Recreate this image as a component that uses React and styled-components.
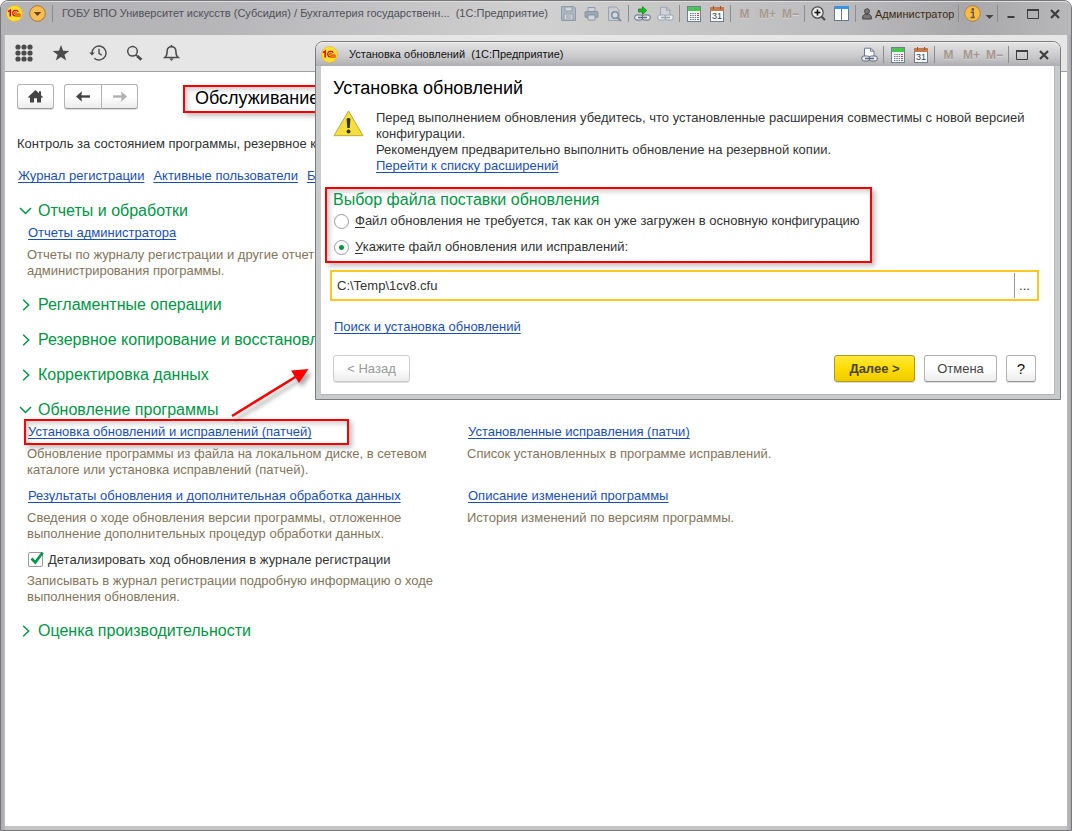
import React, { useState } from "react";
import styled, { createGlobalStyle, css } from "styled-components";

const GlobalStyle = createGlobalStyle`
  * {
    box-sizing: border-box;
  }

  body {
    margin: 0;
    background: #fff;
    color: #333;
    font-family: "Liberation Sans", Arial, sans-serif;
    font-size: 13px;
    line-height: 16px;
  }

  button,
  input {
    font: inherit;
    color: inherit;
  }

  svg {
    flex: none;
  }
`;

/* window chrome */

const Window = styled.div`
  position: relative;
  display: flex;
  flex-direction: column;
  min-height: 100vh;
  padding: 0 4px 4px;
  border: 1px solid #77777a;
  border-radius: 8px 8px 0 0;
  background: linear-gradient(to right, #a9a9ab, #c6c5c6 6px, #c6c5c6 calc(100% - 6px), #a9a9ab);
`;

const TitleBar = styled.header`
  display: flex;
  align-items: flex-start;
  height: 34px;
  margin: 0 -4px;
  padding: 0 5px 0 2px;
  border-radius: 7px 7px 0 0;
  border-top: 1px solid #dedede;
  background: linear-gradient(to right, #b3b3b6, #b6b6b9 20%, #d0d0d0 50%, #bcbcbe 78%, #a8a8ab 90%, #b8b8ba);
`;

const Title = styled.div`
  flex: 1;
  min-width: 0;
  padding-left: ${(p) => p.$indent}px;
  overflow: hidden;
  white-space: pre;
  font-size: 11px;
  line-height: 23px;
  color: ${(p) => (p.$active ? "#111" : "#505058")};
`;

const Tools = styled.div`
  display: flex;
  align-items: center;
  height: 23px;
`;

const Tool = styled.button`
  display: flex;
  align-items: center;
  justify-content: center;
  flex: none;
  width: ${(p) => p.$width || 23}px;
  height: 24px;
  padding: 0;
  border: 0;
  background: none;
  color: #444;

  &:disabled {
    color: #a6988f;
    font-size: 12px;
    font-weight: bold;
    text-shadow: 0 1px 0 #d8d8d8;
  }
`;

const Separator = styled.span`
  flex: none;
  width: 1px;
  height: 17px;
  margin: 0 2px;
  background: #8c8c90;
`;

const User = styled.button`
  display: flex;
  align-items: center;
  gap: 3px;
  width: 98px;
  height: 24px;
  padding: 0 0 0 4px;
  border: 0;
  background: none;
  color: #3c2c10;
  font-size: 11px;
`;

const NavBar = styled.nav`
  display: flex;
  align-items: center;
  height: 37px;
  background: #e6e6e6;
  border-bottom: 1px solid #a0a0a0;
`;

const NavButton = styled.button`
  display: flex;
  align-items: center;
  justify-content: center;
  width: 37px;
  height: 36px;
  padding: 0;
  border: 0;
  background: none;
`;

const Page = styled.main`
  flex: 1;
  padding: 12px;
  background: #fff;
`;

/* controls */

const Button = styled.button`
  display: inline-flex;
  align-items: center;
  justify-content: center;
  min-width: ${(p) => p.$width || 30}px;
  height: 27px;
  padding: 0 12px;
  border: 1px solid #b3b3b3;
  border-bottom-color: #999;
  border-radius: 3px;
  background: linear-gradient(#fff 50%, #ececec);
  box-shadow: 0 1px 0 #ddd;
  color: #444;

  &:disabled {
    border-color: #ccc;
    color: #999;
  }

  ${(p) =>
    p.$primary &&
    css`
      border-color: #b09a1c;
      background: linear-gradient(#ffe93c, #fddc00 50%, #efcb00);
      color: #4a4320;
      font-weight: bold;
    `}

  ${(p) =>
    p.$compact &&
    css`
      height: 25px;
      padding: 0;
    `}
`;

const HelpButton = styled(Button)`
  padding: 0;
  color: #111;
  font-size: 15px;
`;

const ButtonPair = styled.div`
  display: flex;

  ${Button}:first-child {
    border-radius: 3px 0 0 3px;
  }

  ${Button}:last-child {
    border-left: 0;
    border-radius: 0 3px 3px 0;
  }
`;

const Link = styled.a`
  color: #1a50b0;
  text-decoration: underline;
  text-decoration-skip-ink: none;
  text-underline-offset: 2px;
  white-space: nowrap;
`;

const highlight = css`
  border: 2px solid #f80000;
  box-shadow: 3px 3px 5px rgba(0, 0, 0, 0.25), inset 3px 3px 5px rgba(0, 0, 0, 0.18);
`;

/* page */

const PageHeader = styled.div`
  display: flex;
  align-items: center;
  gap: 10px;
  height: 25px;
  white-space: nowrap;
`;

const PageTitle = styled.h1`
  ${highlight}
  height: 28px;
  margin: 4px 0 0 35px;
  padding: 0 10px;
  color: #000;
  font-size: 18px;
  font-weight: normal;
  line-height: 22px;
`;

const Intro = styled.p`
  margin: 27px 0 16px;
`;

const LinkRow = styled.div`
  display: flex;
  gap: 9px;
  margin: 0 0 16px 1px;
`;

const Sections = styled.div`
  display: flex;
  flex-direction: column;
  gap: 13px;
`;

const SectionHeading = styled.button`
  display: flex;
  align-items: center;
  gap: 5px;
  height: 22px;
  padding: 0 0 0 1px;
  border: 0;
  background: none;
  color: #009646;
  font-size: 16px;
`;

const SectionBody = styled.div`
  display: grid;
  grid-template-columns: minmax(0, 440px) minmax(0, 1fr);
  row-gap: 7px;
  padding: 0 0 2px 10px;
`;

const Item = styled.div`
  position: relative;
  grid-column: ${(p) => p.$column || 1};
`;

const ItemTitle = styled.div`
  position: relative;
  display: flex;
  align-items: center;
  height: ${(p) => (p.$check ? 21 : 22)}px;
  padding-left: 1px;
`;

const Description = styled.p`
  margin: 3px 0 0;
  color: #82755b;
`;

const Marker = styled.span`
  ${highlight}
  position: absolute;
  inset: -2px auto -2px -3px;
  width: 325px;
  pointer-events: none;
`;

const Arrow = styled.svg`
  position: absolute;
  left: 201px;
  bottom: 100%;
  margin-bottom: 3px;
  overflow: visible;
  filter: drop-shadow(3px 4px 2px rgba(0, 0, 0, 0.35));
  pointer-events: none;
`;

const CheckLabel = styled.label`
  display: flex;
  align-items: center;
  gap: 5px;
`;

const CheckBox = styled.span`
  position: relative;
  display: flex;

  input {
    appearance: none;
    width: 15px;
    height: 15px;
    margin: 0;
    border: 1px solid #999;
    border-radius: 2px;
    background: #fff;
  }

  svg {
    position: absolute;
    left: 2px;
    bottom: 2px;
    pointer-events: none;
  }

  input:not(:checked) + svg {
    display: none;
  }
`;

/* dialog */

const Dialog = styled.section`
  position: absolute;
  top: 40px;
  left: 314px;
  right: 10px;
  z-index: 2;
  padding: 0 5px 4px;
  border: 1px solid #7c7c7e;
  border-radius: 8px 8px 0 0;
  background: #c9cacc;
`;

const DialogBar = styled(TitleBar)`
  height: 24px;
  margin: 0 -5px;
  padding: 0 5px;
  border-top-color: #f0f0f0;
  background: linear-gradient(#e2e2e3, #c9c9cb 60%, #adaeb1);
`;

const DialogBody = styled.div`
  padding: 11px 15px 12px 9px;
  background: #fff;
  border: 1px solid #b4b4b6;
  border-top: 0;
  border-left: 0;
`;

const DialogTitle = styled.h2`
  margin: 0 0 11px 3px;
  color: #000;
  font-size: 18px;
  font-weight: normal;
  line-height: 22px;
`;

const Notice = styled.div`
  display: flex;
  gap: 12px;
  margin: 0 0 13px 3px;

  p {
    margin: 0;
  }
`;

const FileChoice = styled.fieldset`
  ${highlight}
  width: fit-content;
  height: 76px;
  margin: 0 0 7px -5px;
  padding: 1px 10px 0 6px;

  h3 {
    margin: 0;
    color: #009646;
    font-size: 16px;
    font-weight: normal;
    line-height: 20px;
  }
`;

const RadioLabel = styled.label`
  display: flex;
  align-items: center;
  gap: 6px;
  height: 16px;
  margin-bottom: 10px;
  white-space: pre;

  h3 + & {
    margin-top: 3px;
  }

  u {
    text-underline-offset: 2px;
  }

  input {
    appearance: none;
    width: 15px;
    height: 15px;
    margin: 0 0 0 1px;
    border: 1px solid #999;
    border-radius: 50%;
    background: #fff;
  }

  input:checked {
    background: radial-gradient(#009646 2px, #fff 3px);
  }
`;

const FileField = styled.div`
  display: flex;
  align-items: center;
  height: 31px;
  border: 2px solid #fac81e;
  background: #fff;

  input {
    flex: 1;
    min-width: 0;
    height: 26px;
    padding: 0 5px;
    border: 0;
    outline: 0;
    background: none;
  }

  button {
    width: 23px;
    height: 25px;
    padding: 0 3px 0 0;
    border: 0;
    border-left: 1px solid #999;
    background: none;
  }
`;

const SearchRow = styled.div`
  margin: 18px 0 20px 4px;
`;

const Footer = styled.footer`
  display: flex;
  gap: 9px;
  padding: 0 3px;

  ${Button}:first-child {
    margin-right: auto;
  }
`;

/* icons */

const LogoIcon = () => (
  <svg width="17" height="17" viewBox="0 0 17 17">
    <circle cx="8.5" cy="8.5" r="8" fill="#ffe030" stroke="#eeb02d" strokeWidth=".7" />
    <path d="M2 6.7l2.2-1.5v6.3" fill="none" stroke="#d90b0b" strokeWidth="1.6" />
    <path d="M12.200 7C11.700 4.700 6.700 4.600 6.700 8c0 2 1.200 3 2.800 3h5.400" fill="none" stroke="#d90b0b" strokeWidth="1.200" />
    <path d="M10.500 7.600c-.8-.8-2-.5-2 .5 0 .7.500 1 1.200 1h5" fill="none" stroke="#d90b0b" />
  </svg>
);

const MenuIcon = () => (
  <svg width="17" height="17" viewBox="0 0 17 17">
    <circle cx="8.5" cy="8.5" r="7.8" fill="#f8bd55" stroke="#a97929" />
    <path d="M4.8 7h7.4l-3.7 4z" fill="#634315" />
  </svg>
);

const SaveIcon = () => (
  <svg width="15" height="15" viewBox="0 0 15 15">
    <path d="M.5.500h12.500l1.500 1.500v12.500H.5z" fill="#aeb7c0" stroke="#8f9daa" />
    <path d="M4 1h7v4H4zM3 8h9v6H3z" fill="#d2d5d9" stroke="#909eac" />
    <path d="M5 10h5M5 12h5" stroke="#909eac" />
  </svg>
);

const PrintIcon = () => (
  <svg width="15" height="15" viewBox="0 0 15 15">
    <path d="M4 6V1.5h7V6" fill="#cfd1d4" stroke="#8f9daa" />
    <rect x="1" y="5.5" width="13" height="6" rx="1" fill="#9ba7b2" stroke="#8796a4" />
    <path d="M4 9h7v5H4z" fill="#d5d6d8" stroke="#8796a4" />
  </svg>
);

const PreviewIcon = () => (
  <svg width="15" height="16" viewBox="0 0 15 16">
    <path d="M1.5 1H9l3 3v10.5H1.5z" fill="#cacdd1" stroke="#98a4af" />
    <circle cx="8" cy="9" r="3.3" fill="#d1d9df" stroke="#8090a0" strokeWidth="1.6" />
    <path d="M10.5 11.5L14 15" stroke="#8090a0" strokeWidth="2" />
  </svg>
);

const ChainLinks = ({ stroke }) => (
  <g fill="#eceef0" stroke={stroke}>
    <rect x=".8" y="9" width="8" height="5" rx="2" />
    <rect x="8.2" y="9" width="8" height="5" rx="2" />
    <path d="M4 11.5h9" strokeWidth="1.5" />
  </g>
);

const SendLinkIcon = () => (
  <svg width="17" height="16" viewBox="0 0 17 16">
    <ChainLinks stroke="#59697a" />
    <path d="M4.5 3h4V.5l4.2 4-4.2 4V6h-4z" fill="#13c21a" stroke="#087c10" strokeWidth=".7" />
  </svg>
);

const PageLinkIcon = ({ muted }) => (
  <svg width="17" height="16" viewBox="0 0 17 16">
    <path d="M3.5 9V1.2h6l3.5 3V9" fill={muted ? "#cfd2d6" : "#fff"} stroke={muted ? "#9aa6b1" : "#6d7c8b"} />
    <path d="M9.5 1.2v3H13" fill="none" stroke={muted ? "#9aa6b1" : "#6d7c8b"} />
    <ChainLinks stroke={muted ? "#94a1ae" : "#59697a"} />
  </svg>
);

const CalculatorIcon = () => (
  <svg width="14" height="16" viewBox="0 0 14 16">
    <rect x=".5" y=".5" width="13" height="15" fill="#f4f5f6" stroke="#71808d" />
    <path d="M1 1h12v4H1z" fill="#48c64f" />
    <path d="M3 7.5h6M3 9.5h6M3 11.5h6M3 13.5h6" stroke="#667583" strokeDasharray="1.4 1" />
    <path d="M10 7.5h2M10 9.5h2" stroke="#e33" />
    <path d="M10 11.5h2M10 13.5h2" stroke="#667583" />
  </svg>
);

const CalendarIcon = () => (
  <svg width="14" height="16" viewBox="0 0 14 16">
    <rect x=".5" y="1.5" width="13" height="14" fill="#fafafa" stroke="#71808d" />
    <path d="M0 1h14v4H0z" fill="#c17b4d" />
    <path d="M3.5 0v3M10.5 0v3" stroke="#8e5634" />
    <text x="7" y="13" textAnchor="middle" fontSize="9" fill="#2f4458">31</text>
  </svg>
);

const ZoomIcon = () => (
  <svg width="15" height="15" viewBox="0 0 15 15" fill="none">
    <circle cx="6.5" cy="6.5" r="5.7" fill="#ececec" stroke="#4a4a4a" strokeWidth="1.2" />
    <path d="M3.5 6.5h6M6.5 3.5v6" stroke="#111" strokeWidth="1.6" />
    <path d="M10.7 10.7L14 14" stroke="#4a4a4a" strokeWidth="2" />
  </svg>
);

const SplitIcon = () => (
  <svg width="15" height="15" viewBox="0 0 15 15">
    <rect x=".5" y=".5" width="14" height="14" fill="#fff" stroke="#607890" />
    <path d="M0 0h15v3H0z" fill="#3b94e2" />
    <path d="M7.5 3v12" stroke="#607890" />
  </svg>
);

const PersonIcon = () => (
  <svg width="10" height="12" viewBox="0 0 10 12">
    <circle cx="5" cy="3.3" r="2.5" fill="#777" stroke="#444" />
    <path d="M.7 11V9c0-1.8 2-2.4 3-2.8h2.6c1 .4 3 1 3 2.8v2z" fill="#777" stroke="#444" />
  </svg>
);

const InfoIcon = () => (
  <svg width="17" height="17" viewBox="0 0 17 17">
    <circle cx="8.5" cy="8.5" r="7.8" fill="#f9bb45" stroke="#a8834c" />
    <circle cx="8.8" cy="4.5" r="1.4" fill="#6b5a3a" />
    <path d="M6.700 7.300h2.600v4.800M6.500 12.400h4.400" fill="none" stroke="#6b5a3a" strokeWidth="1.5" />
  </svg>
);

const DropIcon = () => (
  <svg width="9" height="13" viewBox="0 0 9 13">
    <path d="M.5 8h8l-4 4z" fill="#444" />
  </svg>
);

const MinimizeIcon = () => (
  <svg width="8" height="11" viewBox="0 0 8 11">
    <path d="M.5 9h7" stroke="#3d3d3d" strokeWidth="2" />
  </svg>
);

const MaximizeIcon = () => (
  <svg width="12" height="10" viewBox="0 0 12 10">
    <path d="M.5 1v8.5h11V1" fill="none" stroke="#3d3d3d" />
    <path d="M0 1h12" stroke="#3d3d3d" strokeWidth="2" />
  </svg>
);

const CloseIcon = () => (
  <svg width="10" height="10" viewBox="0 0 10 10">
    <path d="M1 1l8 8M9 1L1 9" stroke="#3d3d3d" strokeWidth="2.2" />
  </svg>
);

const AppsIcon = () => (
  <svg width="18" height="18" viewBox="0 0 18 18" fill="#4b4b4b">
    {[3, 9, 15].map((y) => [3, 9, 15].map((x) => <circle key={`${x}-${y}`} cx={x} cy={y} r="2.6" />))}
  </svg>
);

const StarIcon = () => (
  <svg width="18" height="18" viewBox="0 0 18 18">
    <path d="M9 1l2.1 5.7 6.2.2-4.9 3.8 1.8 5.9L9 13.1l-5.2 3.5 1.8-5.9L.7 6.9l6.2-.2z" fill="#4b4b4b" />
  </svg>
);

const HistoryIcon = () => (
  <svg width="18" height="18" viewBox="0 0 18 18" fill="none" stroke="#4b4b4b" strokeWidth="1.4">
    <path d="M3 9a7 7 0 1 1 2.3 5.2" />
    <path d="M.2 8.5h5.6L3 11.6z" fill="#4b4b4b" stroke="none" />
    <path d="M10 4.7v4.6l2.8 2" />
  </svg>
);

const SearchIcon = () => (
  <svg width="17" height="17" viewBox="0 0 17 17" fill="none" stroke="#4b4b4b">
    <circle cx="6.5" cy="6.3" r="4.8" strokeWidth="1.5" />
    <path d="M9.9 9.8l1.6 1.5" strokeWidth="1.4" />
    <path d="M11.2 11l4.2 3.8" strokeWidth="2.8" />
  </svg>
);

const BellIcon = () => (
  <svg width="17" height="18" viewBox="0 0 17 18" fill="none" stroke="#4b4b4b" strokeWidth="1.5">
    <path d="M1.7 13.6c2-1.5 2.4-2.6 2.4-6.1 0-3 1.8-4.8 4.4-4.8s4.4 1.8 4.4 4.8c0 3.5.4 4.6 2.4 6.1z" />
    <path d="M8.5 2.7V.8" />
    <path d="M6.3 14.6h4.4L8.5 17z" fill="#4b4b4b" stroke="none" />
  </svg>
);

const HomeIcon = () => (
  <svg width="15" height="13" viewBox="0 0 15 13">
    <path d="M7.5 0L11 3.3V1.2h2v4l2 1.9-1 1-1-.9V12.5H9V8.2H6v4.3H2V7.2l-1 .9-1-1z" fill="#444" />
  </svg>
);

const BackIcon = ({ color }) => (
  <svg width="14" height="11" viewBox="0 0 14 11">
    <path d="M14 5.5H4" stroke={color} strokeWidth="2.4" />
    <path d="M0 5.5L6 .3l-.8 5.2.8 5.2z" fill={color} />
  </svg>
);

const ForwardIcon = ({ color }) => (
  <svg width="14" height="11" viewBox="0 0 14 11">
    <path d="M0 5.5h10" stroke={color} strokeWidth="2.4" />
    <path d="M14 5.5L8 .3l.8 5.2-.8 5.2z" fill={color} />
  </svg>
);

const ChevronIcon = ({ open }) => (
  <svg width="15" height="12" viewBox="0 0 15 12" fill="none" stroke="#009646" strokeWidth="1.5">
    <path d={open ? "M2 3l5.5 5.5L13 3" : "M5.2.7l5.5 5.3-5.5 5.3"} />
  </svg>
);

const WarningIcon = () => (
  <svg width="31" height="27" viewBox="0 0 31 27">
    <path d="M15.5 1L30 25.7H1z" fill="#f5df3e" stroke="#b9a83a" strokeLinejoin="round" />
    <path d="M13.6 9.5c0-2 3.8-2 3.8 0L16.7 18h-2.4z" fill="#33320f" />
    <circle cx="15.5" cy="21.5" r="2" fill="#33320f" />
  </svg>
);

const CheckIcon = () => (
  <svg width="14" height="14" viewBox="0 0 14 14">
    <path d="M1.5 7.5l3.8 4L12.7 1.5" fill="none" stroke="#009646" strokeWidth="2.7" />
  </svg>
);

function MemoryTools() {
  return (
    <>
      <Tool disabled>M</Tool>
      <Tool disabled>M+</Tool>
      <Tool disabled>M−</Tool>
    </>
  );
}

function Section({ title, open, children }) {
  return (
    <section>
      <SectionHeading aria-expanded={!!open}>
        <ChevronIcon open={open} />
        {title}
      </SectionHeading>
      {open && <SectionBody>{children}</SectionBody>}
    </section>
  );
}

function MainBar() {
  return (
    <TitleBar>
      <Tools>
        <Tool $width={22} aria-label="1С"><LogoIcon /></Tool>
        <Tool $width={25} aria-label="Меню"><MenuIcon /></Tool>
        <Separator />
      </Tools>
      <Title $indent={7}>
        {"ГОБУ ВПО Университет искусств (Субсидия) / Бухгалтерия государственн...  (1С:Предприятие)"}
      </Title>
      <Tools>
        <Tool aria-label="Сохранить"><SaveIcon /></Tool>
        <Tool aria-label="Печать"><PrintIcon /></Tool>
        <Tool aria-label="Просмотр"><PreviewIcon /></Tool>
        <Separator />
        <Tool aria-label="Перейти по ссылке"><SendLinkIcon /></Tool>
        <Tool aria-label="Получить ссылку"><PageLinkIcon muted /></Tool>
        <Separator />
        <Tool aria-label="Калькулятор"><CalculatorIcon /></Tool>
        <Tool aria-label="Календарь"><CalendarIcon /></Tool>
        <Separator />
        <MemoryTools />
        <Separator />
        <Tool aria-label="Масштаб"><ZoomIcon /></Tool>
        <Tool aria-label="Панели"><SplitIcon /></Tool>
        <Separator />
        <User><PersonIcon />Администратор</User>
        <Separator />
        <Tool $width={22} aria-label="Справка"><InfoIcon /></Tool>
        <Tool $width={12} aria-label="Ещё"><DropIcon /></Tool>
        <Separator />
        <Tool $width={22} aria-label="Свернуть"><MinimizeIcon /></Tool>
        <Tool $width={22} aria-label="Развернуть"><MaximizeIcon /></Tool>
        <Tool $width={22} aria-label="Закрыть"><CloseIcon /></Tool>
      </Tools>
    </TitleBar>
  );
}

function UpdateDialog() {
  const [source, setSource] = useState("file");
  const [path, setPath] = useState("C:\\Temp\\1cv8.cfu");

  return (
    <Dialog role="dialog" aria-labelledby="dialog-title">
      <DialogBar>
        <Tools>
          <Tool $width={17} aria-label="1С"><LogoIcon /></Tool>
        </Tools>
        <Title $active $indent={11}>{"Установка обновлений  (1С:Предприятие)"}</Title>
        <Tools>
          <Tool aria-label="Получить ссылку"><PageLinkIcon /></Tool>
          <Separator />
          <Tool aria-label="Калькулятор"><CalculatorIcon /></Tool>
          <Tool aria-label="Календарь"><CalendarIcon /></Tool>
          <Separator />
          <MemoryTools />
          <Separator />
          <Tool $width={22} aria-label="Развернуть"><MaximizeIcon /></Tool>
          <Tool $width={22} aria-label="Закрыть"><CloseIcon /></Tool>
        </Tools>
      </DialogBar>
      <DialogBody>
        <DialogTitle id="dialog-title">Установка обновлений</DialogTitle>
        <Notice>
          <WarningIcon />
          <p>
            Перед выполнением обновления убедитесь, что установленные расширения совместимы с новой версией<br />
            конфигурации.<br />
            Рекомендуем предварительно выполнить обновление на резервной копии.<br />
            <Link href="#extensions">Перейти к списку расширений</Link>
          </p>
        </Notice>
        <FileChoice>
          <h3>Выбор файла поставки обновления</h3>
          <RadioLabel>
            <input type="radio" name="source" checked={source === "none"} onChange={() => setSource("none")} />
            <span><u>Ф</u>айл обновления не требуется, так как он уже загружен в основную конфигурацию</span>
          </RadioLabel>
          <RadioLabel>
            <input type="radio" name="source" checked={source === "file"} onChange={() => setSource("file")} />
            <span><u>У</u>кажите файл обновления или исправлений:</span>
          </RadioLabel>
        </FileChoice>
        <FileField>
          <input aria-label="Файл обновления" value={path} onChange={(e) => setPath(e.target.value)} />
          <button aria-label="Выбрать файл">...</button>
        </FileField>
        <SearchRow>
          <Link href="#search">Поиск и установка обновлений</Link>
        </SearchRow>
        <Footer>
          <Button $width={77} disabled>&lt; Назад</Button>
          <Button $width={81} $primary>Далее &gt;</Button>
          <Button $width={73}>Отмена</Button>
          <HelpButton>?</HelpButton>
        </Footer>
      </DialogBody>
    </Dialog>
  );
}

function App() {
  const [detailed, setDetailed] = useState(true);

  return (
    <>
      <GlobalStyle />
      <Window>
        <MainBar />
        <NavBar>
          <NavButton aria-label="Все функции"><AppsIcon /></NavButton>
          <NavButton aria-label="Избранное"><StarIcon /></NavButton>
          <NavButton aria-label="История"><HistoryIcon /></NavButton>
          <NavButton aria-label="Поиск"><SearchIcon /></NavButton>
          <NavButton aria-label="Оповещения"><BellIcon /></NavButton>
        </NavBar>
        <Page>
          <PageHeader>
            <Button $compact $width={37} aria-label="Домой"><HomeIcon /></Button>
            <ButtonPair>
              <Button $compact $width={38} aria-label="Назад"><BackIcon color="#444" /></Button>
              <Button $compact $width={36} aria-label="Вперед"><ForwardIcon color="#b0b0b0" /></Button>
            </ButtonPair>
            <PageTitle>Обслуживание</PageTitle>
          </PageHeader>
          <Intro>Контроль за состоянием программы, резервное копирование.</Intro>
          <LinkRow>
            <Link href="#log">Журнал регистрации</Link>
            <Link href="#users">Активные пользователи</Link>
            <Link href="#locks">Блокировка</Link>
          </LinkRow>
          <Sections>
            <Section title="Отчеты и обработки" open>
              <Item>
                <ItemTitle><Link href="#reports">Отчеты администратора</Link></ItemTitle>
                <Description>
                  Отчеты по журналу регистрации и другие отчеты для<br />
                  администрирования программы.
                </Description>
              </Item>
            </Section>
            <Section title="Регламентные операции" />
            <Section title="Резервное копирование и восстановление" />
            <Section title="Корректировка данных" />
            <Section title="Обновление программы" open>
              <Item>
                <ItemTitle>
                  <Link href="#install">Установка обновлений и исправлений (патчей)</Link>
                  <Marker />
                  <Arrow width="84" height="50" viewBox="228 368 84 50">
                    <path d="M232 416L297 376" stroke="#f80000" strokeWidth="2.6" />
                    <path d="M308.5 369L291 370.5L299 383z" fill="#f80000" />
                  </Arrow>
                </ItemTitle>
                <Description>
                  Обновление программы из файла на локальном диске, в сетевом<br />
                  каталоге или установка исправлений (патчей).
                </Description>
              </Item>
              <Item $column={2}>
                <ItemTitle><Link href="#patches">Установленные исправления (патчи)</Link></ItemTitle>
                <Description>Список установленных в программе исправлений.</Description>
              </Item>
              <Item>
                <ItemTitle><Link href="#results">Результаты обновления и дополнительная обработка данных</Link></ItemTitle>
                <Description>
                  Сведения о ходе обновления версии программы, отложенное<br />
                  выполнение дополнительных процедур обработки данных.
                </Description>
              </Item>
              <Item $column={2}>
                <ItemTitle><Link href="#changes">Описание изменений программы</Link></ItemTitle>
                <Description>История изменений по версиям программы.</Description>
              </Item>
              <Item>
                <ItemTitle $check>
                  <CheckLabel>
                    <CheckBox>
                      <input type="checkbox" checked={detailed} onChange={(e) => setDetailed(e.target.checked)} />
                      <CheckIcon />
                    </CheckBox>
                    Детализировать ход обновления в журнале регистрации
                  </CheckLabel>
                </ItemTitle>
                <Description>
                  Записывать в журнал регистрации подробную информацию о ходе<br />
                  выполнения обновления.
                </Description>
              </Item>
            </Section>
            <Section title="Оценка производительности" />
          </Sections>
        </Page>
        <UpdateDialog />
      </Window>
    </>
  );
}

export default App;
